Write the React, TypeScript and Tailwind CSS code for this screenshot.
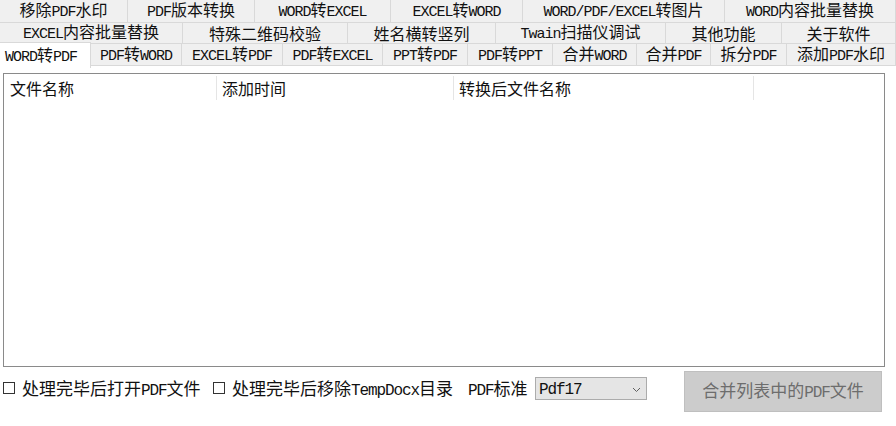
import React from "react";

const isAscii = (s: string) => /^[\x00-\x7F]+$/.test(s);

function Mixed({ text, big = false }: { text: string; big?: boolean }) {
  const parts = text.match(/[\x00-\x7F]+|[^\x00-\x7F]+/g) ?? [];
  return (
    <span className="whitespace-nowrap">
      {parts.map((p, i) =>
        isAscii(p) ? (
          <span
            key={i}
            className={
              big
                ? "font-['Liberation_Mono',monospace] text-[16px] tracking-[-1.1px]"
                : "font-['Liberation_Mono',monospace] text-[15px] tracking-[-1px]"
            }
          >
            {p}
          </span>
        ) : (
          <span key={i}>{p}</span>
        )
      )}
    </span>
  );
}

const row1: [string, string][] = [
  ["移除PDF水印", "w-[128px]"],
  ["PDF版本转换", "w-[127px]"],
  ["WORD转EXCEL", "w-[136px]"],
  ["EXCEL转WORD", "w-[132px]"],
  ["WORD/PDF/EXCEL转图片", "w-[202px]"],
  ["WORD内容批量替换", "w-[171px]"],
];

const row2: [string, string][] = [
  ["EXCEL内容批量替换", "w-[183px]"],
  ["特殊二维码校验", "w-[165px]"],
  ["姓名横转竖列", "w-[148px]"],
  ["Twain扫描仪调试", "w-[170px]"],
  ["其他功能", "w-[116px]"],
  ["关于软件", "w-[114px]"],
];

const row3: [string, string][] = [
  ["PDF转WORD", "w-[91px]"],
  ["EXCEL转PDF", "w-[101px]"],
  ["PDF转EXCEL", "w-[100px]"],
  ["PPT转PDF", "w-[85px]"],
  ["PDF转PPT", "w-[85px]"],
  ["合并WORD", "w-[84px]"],
  ["合并PDF", "w-[74px]"],
  ["拆分PDF", "w-[76px]"],
  ["添加PDF水印", "w-[109px]"],
];

export default function App() {
  return (
    <div className="w-[896px] h-[426px] bg-white overflow-hidden font-['Noto_Sans_CJK_SC',sans-serif] text-[16px] leading-[20px] text-[#111]">
      {/* Tab row 1 */}
      <div className="flex h-[23px]">
        {row1.map(([t, w]) => (
          <div
            key={t}
            className={`${w} h-full shrink-0 flex items-center justify-center bg-[#f0f0f0] border-r border-b border-[#d9d9d9]`}
          >
            <Mixed text={t} />
          </div>
        ))}
      </div>
      {/* Tab row 2 */}
      <div className="flex h-[21px]">
        {row2.map(([t, w]) => (
          <div
            key={t}
            className={`${w} h-full shrink-0 flex items-center justify-center bg-[#f0f0f0] border-r border-b border-[#d9d9d9]`}
          >
            <Mixed text={t} />
          </div>
        ))}
      </div>
      {/* Tab row 3 */}
      <div className="flex h-[24px] items-start">
        <div className="relative z-10 -mt-[2px] w-[91px] h-[26px] shrink-0 flex items-center justify-center pr-[8px] bg-white border-r border-t border-[#d9d9d9]">
          <Mixed text="WORD转PDF" />
        </div>
        {row3.map(([t, w]) => (
          <div
            key={t}
            className={`${w} h-[22px] shrink-0 flex items-center justify-center bg-[#f0f0f0] border-r border-b border-[#d9d9d9]`}
          >
            <Mixed text={t} />
          </div>
        ))}
      </div>

      {/* Content */}
      <div className="pl-[3px] pt-[5px]">
        <div className="w-[882px] h-[294px] border border-[#8a8a8a] bg-white">
          <div className="flex h-[26px] items-start">
            <div className="w-[213px] h-[24px] mt-[2px] pl-[6px] flex items-center border-r border-[#e5e5e5]">
              文件名称
            </div>
            <div className="w-[237px] h-[24px] mt-[2px] pl-[5px] flex items-center border-r border-[#e5e5e5]">
              添加时间
            </div>
            <div className="w-[300px] h-[24px] mt-[2px] pl-[5px] flex items-center border-r border-[#e5e5e5]">
              转换后文件名称
            </div>
          </div>
        </div>

        {/* Bottom controls */}
        <div className="flex items-start h-[41px] mt-[4px] text-[17px]">
          <div className="w-[12px] h-[12px] mt-[11px] border border-[#333] bg-white shrink-0" />
          <div className="ml-[7px] w-[181px] mt-[6px] leading-[21px] shrink-0">
            <Mixed big text="处理完毕后打开PDF文件" />
          </div>
          <div className="ml-[10px] w-[12px] h-[12px] mt-[11px] border border-[#333] bg-white shrink-0" />
          <div className="ml-[7px] w-[236px] mt-[6px] leading-[21px] shrink-0">
            <Mixed big text="处理完毕后移除TempDocx目录" />
          </div>
          <div className="w-[67px] mt-[6px] leading-[21px] shrink-0">
            <Mixed big text="PDF标准" />
          </div>
          <div className="w-[112px] h-[23px] mt-[6px] shrink-0 flex items-center justify-between pl-[3px] pr-[5px] bg-[#e5e5e5] border border-[#acacac]">
            <span className="leading-[19px]">
              <Mixed big text="Pdf17" />
            </span>
            <svg width="9" height="6" viewBox="0 0 9 6" className="mt-[3px]">
              <polyline points="1,1 4.5,4.5 8,1" fill="none" stroke="#606060" strokeWidth="1" />
            </svg>
          </div>
          <div className="ml-[37px] w-[198px] h-[41px] shrink-0 flex items-center justify-center bg-[#cccccc] border border-[#bfbfbf] text-[#6d6d6d]">
            <Mixed big text="合并列表中的PDF文件" />
          </div>
        </div>
      </div>
    </div>
  );
}
